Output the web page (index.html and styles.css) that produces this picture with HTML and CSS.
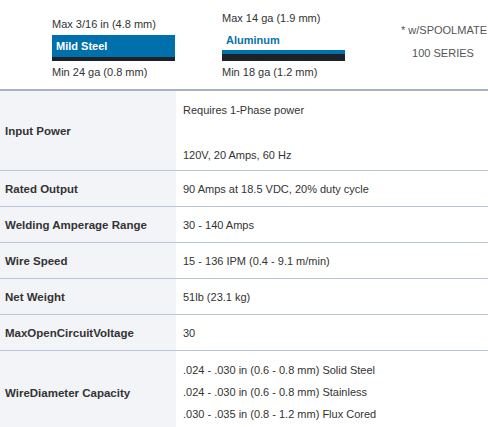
FILE: index.html
```html
<!DOCTYPE html>
<html>
<head>
<meta charset="utf-8">
<link rel="stylesheet" href="styles.css">
</head>
<body>
<div class="top">
  <div class="gauge gauge-steel">
    <div class="gauge-max">Max 3/16 in (4.8 mm)</div>
    <div class="bar-steel"><span>Mild Steel</span></div>
    <div class="gauge-min">Min 24 ga (0.8 mm)</div>
  </div>
  <div class="gauge gauge-alu">
    <div class="gauge-max">Max 14 ga (1.9 mm)</div>
    <div class="alu-label">Aluminum</div>
    <div class="bar-alu"></div>
    <div class="gauge-min">Min 18 ga (1.2 mm)</div>
  </div>
  <div class="note">
    <div>* w/SPOOLMATE</div>
    <div>100 SERIES</div>
  </div>
</div>
<table class="specs">
  <tr class="row-input">
    <th>Input Power</th>
    <td><p class="p1">Requires 1-Phase power</p><p class="p2">120V, 20 Amps, 60 Hz</p></td>
  </tr>
  <tr><th>Rated Output</th><td>90 Amps at 18.5 VDC, 20% duty cycle</td></tr>
  <tr><th>Welding Amperage Range</th><td>30 - 140 Amps</td></tr>
  <tr><th>Wire Speed</th><td>15 - 136 IPM (0.4 - 9.1 m/min)</td></tr>
  <tr><th>Net Weight</th><td>51lb (23.1 kg)</td></tr>
  <tr><th>MaxOpenCircuitVoltage</th><td>30</td></tr>
  <tr class="row-wire">
    <th>WireDiameter Capacity</th>
    <td><div>.024 - .030 in (0.6 - 0.8 mm) Solid Steel</div><div>.024 - .030 in (0.6 - 0.8 mm) Stainless</div><div>.030 - .035 in (0.8 - 1.2 mm) Flux Cored</div></td>
  </tr>
</table>
</body>
</html>
```
FILE: styles.css
```css
html, body {
  margin: 0;
  padding: 0;
  background: #fff;
}
body {
  font-family: "Liberation Sans", Arial, sans-serif;
  font-size: 11px;
  color: #333;
  width: 488px;
  overflow: hidden;
}
.top {
  display: flex;
  height: 89px;
}
.gauge {
  width: 123px;
  line-height: 13px;
}
.gauge-steel {
  margin-left: 52px;
  padding-top: 18px;
}
.gauge-steel .bar-steel {
  margin-top: 4px;
  height: 22px;
  background: #0070ad;
  border-bottom: 4px solid #1b2329;
  color: #fff;
  font-weight: bold;
  line-height: 22px;
  padding-left: 4px;
}
.gauge-min {
  margin-top: 5px;
}
.gauge-alu {
  margin-left: 47px;
  padding-top: 12px;
}
.alu-label {
  margin-top: 8px;
  padding-left: 4px;
  color: #0a72ae;
  font-weight: bold;
  line-height: 14px;
}
.bar-alu {
  margin-top: 3px;
  height: 4px;
  background: #0070ad;
  border-bottom: 7px solid #1b2329;
}
.gauge-alu .gauge-min {
  margin-top: 5px;
}
.note {
  margin-left: 56px;
  padding-top: 24px;
  width: 84px;
  white-space: nowrap;
  text-align: center;
  color: #555;
  line-height: 13px;
}
.note div + div {
  margin-top: 10px;
}
.specs {
  width: 488px;
  border-collapse: collapse;
  border-top: 2px solid #a7b1c2;
}
.specs th, .specs td {
  border-bottom: 1px solid #b9c4d8;
  height: 35px;
  padding: 0;
  vertical-align: middle;
  line-height: 14px;
}
.specs th {
  width: 176px;
  background: #f3f4f8;
  text-align: left;
  font-weight: bold;
  font-size: 11.5px;
  padding-left: 5px;
  box-sizing: border-box;
}
.specs td {
  padding-left: 7px;
}
.row-input th, .row-input td {
  height: 79px;
}
.row-input td {
  vertical-align: top;
}
.row-input p {
  margin: 0;
}
.row-input .p1 {
  margin-top: 12px;
}
.row-input .p2 {
  margin-top: 31px;
}
.row-wire td {
  vertical-align: top;
  padding-top: 8px;
  padding-bottom: 10px;
}
.row-wire td div {
  line-height: 22px;
}
```
